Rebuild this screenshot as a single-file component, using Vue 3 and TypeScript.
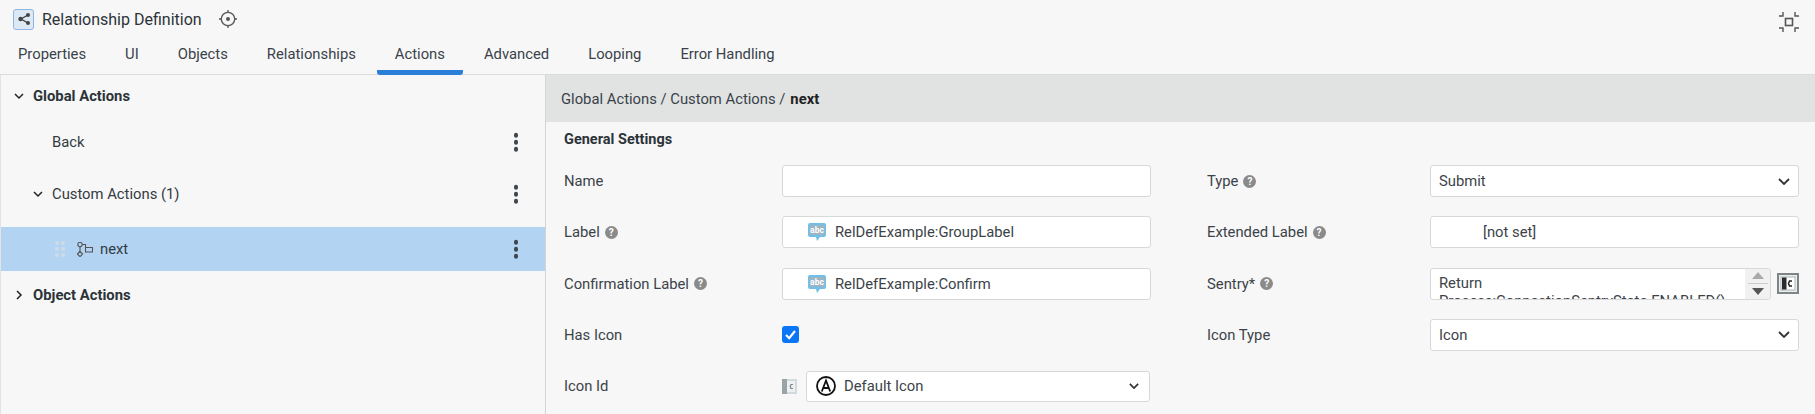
<script setup lang="ts">
const tabs: string[] = ['Properties', 'UI', 'Objects', 'Relationships', 'Actions', 'Advanced', 'Looping', 'Error Handling']
</script>

<template>
  <div class="page">
    <header class="title-bar">
      <span class="app-icon">
        <svg width="14" height="14" viewBox="0 0 14 14"><path d="M11 3 4 7l7 4" fill="none" stroke="#444" stroke-width="1.4"/><circle cx="3.5" cy="7" r="2.2" fill="#444"/><circle cx="11" cy="3" r="2" fill="#444"/><circle cx="11" cy="11" r="2" fill="#444"/></svg>
      </span>
      <span class="title">Relationship Definition</span>
      <svg class="target" width="18" height="18" viewBox="0 0 18 18" fill="none" stroke="#555" stroke-width="1.3"><circle cx="9" cy="9" r="6.7"/><path d="M9 0v3M9 15v3M0 9h3M15 9h3"/><circle cx="9" cy="9" r="2" fill="#555" stroke="none"/></svg>
      <svg class="compress" width="22" height="22" viewBox="0 0 22 22" fill="none" stroke="#555" stroke-width="1.4"><path d="M1 5h4V1M17 1v4h4M1 17h4v4M17 21v-4h4"/><rect x="7.5" y="7.5" width="7" height="7" stroke-width="1.6"/></svg>
    </header>
    <nav class="tabs">
      <div v-for="t in tabs" :key="t" class="tab" :class="{ active: t === 'Actions' }">{{ t }}</div>
    </nav>
    <main class="main">
      <aside class="tree">
        <div class="row group first">
          <svg class="chev" width="10" height="10" viewBox="0 0 10 10"><path d="M1 3l4 4 4-4" fill="none" stroke="#222" stroke-width="1.5"/></svg>
          <b>Global Actions</b>
        </div>
        <div class="row leaf back">
          <span>Back</span>
          <span class="kebab"><i></i><i></i><i></i></span>
        </div>
        <div class="row custom">
          <svg class="chev" width="10" height="10" viewBox="0 0 10 10"><path d="M1 3l4 4 4-4" fill="none" stroke="#222" stroke-width="1.5"/></svg>
          <span>Custom Actions (1)</span>
          <span class="kebab"><i></i><i></i><i></i></span>
        </div>
        <div class="row selected">
          <span class="grip"><i></i><i></i><i></i><i></i><i></i><i></i></span>
          <svg class="node" width="16" height="15" viewBox="0 0 16 15" fill="none" stroke="#555" stroke-width="1.1"><circle cx="3" cy="2.5" r="2.2"/><path d="M5.2 2.500h3.300v3M3 4.700v4.700M8.500 5.500h7v4.500h-7zM6 9.500"/><path d="M3 9.400l2.600 2.600-2.600 2.600-2.600-2.600z"/></svg>
          <span>next</span>
          <span class="kebab"><i></i><i></i><i></i></span>
        </div>
        <div class="row group last">
          <svg class="chev side" width="10" height="10" viewBox="0 0 10 10"><path d="M3 1l4 4-4 4" fill="none" stroke="#222" stroke-width="1.5"/></svg>
          <b>Object Actions</b>
        </div>
      </aside>
      <section class="detail">
        <div class="crumbs"><span>Global Actions / Custom Actions /</span><b>next</b></div>
        <h2 class="section">General Settings</h2>
        <div class="grid">
          <div class="field">
            <label>Name</label>
            <div class="input"></div>
          </div>
          <div class="field">
            <label>Type <em class="help">?</em></label>
            <div class="input select">
              <span>Submit</span>
              <svg width="12" height="7" viewBox="0 0 12 7"><path d="M1 1l5 5 5-5" fill="none" stroke="#333" stroke-width="1.8"/></svg>
            </div>
          </div>
          <div class="field">
            <label>Label <em class="help">?</em></label>
            <div class="input loc">
              <svg class="abc" width="20" height="20" viewBox="0 0 20 20"><path d="M3 1h14a2 2 0 0 1 2 2v10a2 2 0 0 1-2 2h-4l-3 4-1-4H3a2 2 0 0 1-2-2V3a2 2 0 0 1 2-2z" fill="#6fbfe8"/><rect x="2.5" y="3" width="15" height="10" fill="#9db4c3"/><text x="10" y="11" text-anchor="middle" class="abc-text">abc</text></svg>
              <span>RelDefExample:GroupLabel</span>
            </div>
          </div>
          <div class="field">
            <label>Extended Label <em class="help">?</em></label>
            <div class="input notset"><span>[not set]</span></div>
          </div>
          <div class="field">
            <label>Confirmation Label <em class="help">?</em></label>
            <div class="input loc">
              <svg class="abc" width="20" height="20" viewBox="0 0 20 20"><path d="M3 1h14a2 2 0 0 1 2 2v10a2 2 0 0 1-2 2h-4l-3 4-1-4H3a2 2 0 0 1-2-2V3a2 2 0 0 1 2-2z" fill="#6fbfe8"/><rect x="2.5" y="3" width="15" height="10" fill="#9db4c3"/><text x="10" y="11" text-anchor="middle" class="abc-text">abc</text></svg>
              <span>RelDefExample:Confirm</span>
            </div>
          </div>
          <div class="field">
            <label>Sentry* <em class="help">?</em></label>
            <div class="sentry-wrap">
              <div class="input sentry">
                <div class="code">Return<br />Process:ConnectionSentryState.ENABLED()</div>
                <div class="spin">
                  <svg width="12" height="7" viewBox="0 0 12 7"><path d="M6 0l6 7H0z" fill="#aaa"/></svg>
                  <span class="spin-line"></span>
                  <svg width="12" height="7" viewBox="0 0 12 7"><path d="M0 0h12L6 7z" fill="#555"/></svg>
                </div>
              </div>
              <span class="expr dark">
                <svg width="22" height="21" viewBox="0 0 22 21"><rect x="1" y="1" width="20" height="19" fill="#e9ecec" stroke="#7d8587" stroke-width="2"/><rect x="4" y="4" width="14" height="13" fill="#fff" stroke="#b0b5b6"/><rect x="5" y="4.500" width="4.500" height="12" fill="#2b2b2b"/><path d="M15 8h-2.500l-1 2.500 1 2.500H15" fill="none" stroke="#222" stroke-width="1.500"/></svg>
              </span>
            </div>
          </div>
          <div class="field">
            <label>Has Icon</label>
            <div class="check-cell">
              <span class="check">
                <svg width="13" height="13" viewBox="0 0 13 13"><path d="M2 7l3.200 3.200L11 3" fill="none" stroke="#fff" stroke-width="2.200"/></svg>
              </span>
            </div>
          </div>
          <div class="field">
            <label>Icon Type</label>
            <div class="input select">
              <span>Icon</span>
              <svg width="12" height="7" viewBox="0 0 12 7"><path d="M1 1l5 5 5-5" fill="none" stroke="#333" stroke-width="1.8"/></svg>
            </div>
          </div>
          <div class="field">
            <label>Icon Id</label>
            <div class="icon-id">
              <svg class="expr-small" width="15" height="15" viewBox="0 0 15 15"><rect width="15" height="15" fill="#d2dadd"/><rect width="5" height="15" fill="#9aa3a6"/><rect x="5" y="2" width="8" height="11" fill="#eef1f2"/><path d="M11 5.500H9l-.8 2 .8 2h2" fill="none" stroke="#7d8587" stroke-width="1.200"/></svg>
              <div class="input select icon-select">
                <span class="a-wrap">
                  <svg width="20" height="20" viewBox="0 0 20 20" fill="none" stroke="#111"><circle cx="10" cy="10" r="9" stroke-width="1.800"/><path d="M5.800 15.500 10 4.500 14.200 15.500M7.200 12h5.600" stroke-width="1.800"/></svg>
                  <span>Default Icon</span>
                </span>
                <svg width="10" height="6" viewBox="0 0 12 7"><path d="M1 1l5 5 5-5" fill="none" stroke="#333" stroke-width="2"/></svg>
              </div>
            </div>
          </div>
        </div>
      </section>
    </main>
  </div>
</template>

<style>
html, body { margin: 0; background: #f7f7f7; }
</style>

<style scoped>
.page {
  width: 1815px;
  height: 414px;
  overflow: hidden;
  background: #f7f7f7;
  color: #333b42;
  font-family: Roboto, "Liberation Sans", sans-serif;
  font-size: 14.8px;
  display: flex;
  flex-direction: column;
  box-sizing: border-box;
}
.title-bar {
  height: 38px;
  display: flex;
  align-items: center;
  padding: 0 15px 0 13px;
  flex: none;
}
.app-icon {
  width: 21px;
  height: 21px;
  box-sizing: border-box;
  border: 1px solid #8fb5e3;
  border-radius: 3px;
  background: #dde8f5;
  display: flex;
  align-items: center;
  justify-content: center;
}
.title { margin-left: 8px; font-size: 16px; color: #2c3338; }
.target { margin-left: 17px; }
.compress { margin-left: auto; margin-top: 6px; }
.tabs {
  height: 37px;
  flex: none;
  display: flex;
  gap: 3px;
  box-sizing: border-box;
  border-bottom: 1px solid #dcdcdc;
}
.tab {
  padding: 7px 18px 0;
  font-size: 14.8px;
  position: relative;
  color: #39424a;
}
.tab.active::after {
  content: '';
  position: absolute;
  left: 0;
  right: 0;
  bottom: -1px;
  height: 5px;
  background: #2b7fd8;
  border-radius: 0 0 3px 3px;
}
.main { flex: 1; display: flex; min-height: 0; }
.tree {
  width: 546px;
  flex: none;
  box-sizing: border-box;
  border-right: 1px solid #d4d4d4;
  border-left: 1px solid #e3e3e3;
}
.row { display: flex; align-items: center; position: relative; font-size: 14.8px; box-sizing: border-box; }
.row b { font-weight: 700; color: #2c3338; font-size: 14.8px; }
.first { height: 41px; padding-top: 1px; padding-left: 13px; }
.first b { margin-left: 9px; }
.back { height: 52px; padding-left: 51px; }
.custom { height: 52px; padding-left: 32px; margin-bottom: 7px; }
.custom span:first-of-type { margin-left: 9px; }
.selected { height: 44px; background: #b3d3f2; }
.grip {
  margin-left: 54px;
  display: grid;
  grid-template-columns: 4px 4px;
  gap: 2px;
}
.grip i { width: 4px; height: 4px; border-radius: 50%; background: #cfdbe5; }
.node { margin-left: 12px; }
.selected > span:nth-of-type(2) { margin-left: 7px; }
.last { height: 48px; padding-left: 13px; }
.last b { margin-left: 9px; }
.kebab {
  position: absolute;
  right: 27px;
  top: 50%;
  transform: translateY(-50%);
  display: flex;
  flex-direction: column;
  gap: 2.500px;
}
.kebab i { width: 4.500px; height: 4.500px; border-radius: 50%; background: #3f474d; }
.detail { flex: 1; min-width: 0; }
.crumbs {
  height: 47px;
  background: #e1e3e2;
  display: flex;
  align-items: center;
  gap: 5px;
  padding-left: 15px;
  color: #39424a;
  font-size: 14.8px;
}
.crumbs b { color: #222; }
.section {
  margin: 0;
  padding: 9px 0 0 18px;
  height: 34px;
  box-sizing: border-box;
  font-size: 14.5px;
  font-weight: 700;
  color: #2c3338;
}
.grid {
  display: grid;
  grid-template-columns: 643px 592px;
  grid-auto-rows: 32px;
  row-gap: 19.33px;
  padding-left: 18px;
  padding-top: 9px;
}
.field { display: flex; align-items: center; }
.field label { width: 218px; flex: none; display: flex; align-items: center; gap: 5px; color: #3b4349; }
.field:nth-child(even) label { width: 223px; }
.help {
  width: 13px;
  height: 13px;
  border-radius: 50%;
  background: #8a8a8a;
  color: #fff;
  font-size: 10px;
  font-weight: 700;
  font-style: normal;
  display: flex;
  align-items: center;
  justify-content: center;
}
.input {
  width: 369px;
  height: 32px;
  box-sizing: border-box;
  background: #fff;
  border: 1px solid #d8d8d8;
  border-radius: 3px;
  display: flex;
  align-items: center;
  color: #3b4349;
}
.select { justify-content: space-between; padding: 0 8px 0 8px; }
.loc { padding-left: 24px; }
.abc { margin-right: 8px; flex: none; }
.abc-text { font-family: Roboto, sans-serif; font-size: 8.500px; font-weight: 700; fill: #fff; }
.notset { padding-left: 52px; }
.sentry-wrap { display: flex; align-items: center; gap: 6px; }
.sentry { width: 341px; position: relative; overflow: hidden; align-items: flex-start; }
.code { padding: 5px 0 0 8px; line-height: 18px; white-space: nowrap; color: #3b4349; }
.spin {
  position: absolute;
  right: 0;
  top: 0;
  bottom: 0;
  width: 25px;
  background: #f1f1f1;
  display: flex;
  flex-direction: column;
  align-items: center;
  justify-content: center;
  gap: 4px;
}
.spin-line { width: 20px; height: 1px; background: #ccc; }
.expr { display: block; height: 21px; }
.check-cell { display: flex; align-items: center; }
.check {
  width: 17px;
  height: 17px;
  border-radius: 3px;
  background: #0a76f6;
  display: flex;
  align-items: center;
  justify-content: center;
}
.icon-id { display: flex; align-items: center; gap: 9px; margin-left: 0; }
.expr-small { flex: none; }
.icon-select { width: 344px; height: 31px; padding-right: 10px; }
.a-wrap { display: flex; align-items: center; gap: 8px; margin-left: 1px; }
</style>
